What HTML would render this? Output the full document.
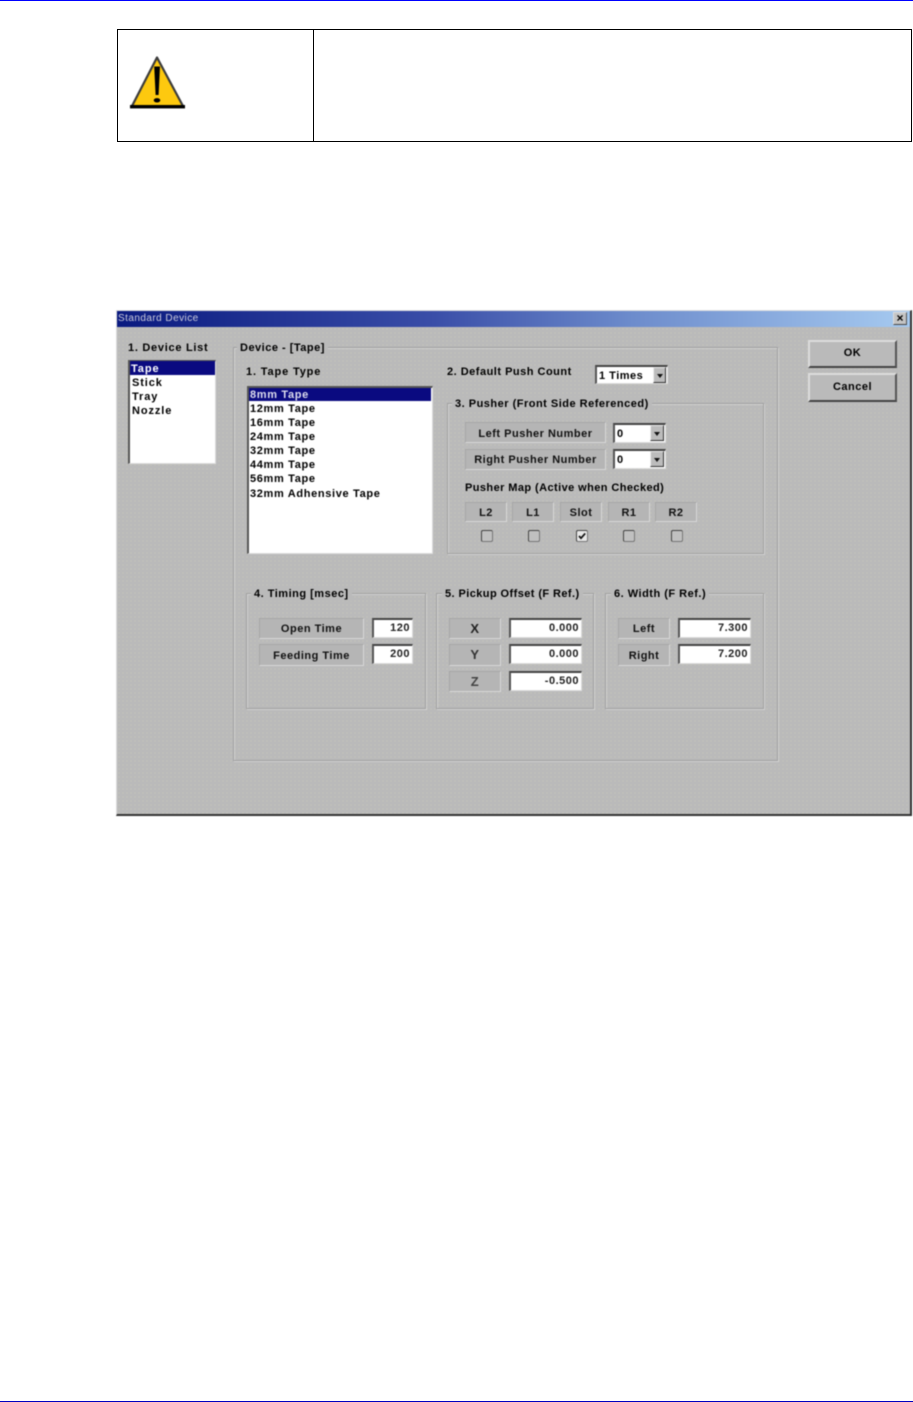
<!DOCTYPE html>
<html><head><meta charset="utf-8"><style>
html,body{margin:0;padding:0;background:#fff}
#p{position:relative;width:913px;height:1402px;overflow:hidden;background:#fff;font-family:"Liberation Sans",sans-serif}
#p div,#p svg{position:absolute;box-sizing:border-box}
#w{left:0;top:0;width:913px;height:1402px;filter:blur(.4px)}
#d{left:116px;top:310px;width:796px;height:506px;background-color:#bababa;background-image:radial-gradient(#c8c8b8 .6px,transparent .8px);background-size:4px 4px;border-right:2px solid #333;border-bottom:2px solid #333;border-top:1px solid #ddd;border-left:1px solid #ddd}
.abs{position:absolute}
.t{font-weight:bold;font-size:11px;letter-spacing:.5px;line-height:14px;height:14px;white-space:nowrap;color:#000}
.li{letter-spacing:.66px}
.sh{letter-spacing:.9px}
.g{border:1px solid #a0a0a0;box-shadow:1px 1px 0 #d2d2d2,inset 1px 1px 0 #d2d2d2}
.bg{background:#bababa;padding:0 3px}
.lb{border:1px solid #a6a6a6;border-right-color:#d8d8d8;border-bottom-color:#d8d8d8;background:#b5b5b5;text-align:center;color:#111;font-weight:bold;font-size:11px;letter-spacing:.5px;white-space:nowrap}
.in{background:#fff;border-top:2px solid #444;border-left:2px solid #555;border-right:1px solid #ddd;border-bottom:1px solid #ddd;text-align:right;font-weight:bold;font-size:11px;letter-spacing:.5px;color:#222;padding-right:2px}
.ar{background:#bcbcbc;border-right:1px solid #333;border-bottom:1px solid #333;border-top:1px solid #eee;border-left:1px solid #eee}
.ar:after{content:"";position:absolute;left:3px;top:6px;border:3px solid transparent;border-top:4px solid #111;border-bottom:0}
.cb{width:12px;height:12px;top:530px;background:#c0c0c0;border:1px solid #444;border-right-color:#777;border-bottom-color:#777;border-radius:2px}
.btn{background:#bababa;border-top:2px solid #dcdcdc;border-left:2px solid #dcdcdc;border-right:2px solid #555;border-bottom:2px solid #444;text-align:center;font-weight:bold;font-size:11px;letter-spacing:.5px;color:#000}
.sel{background:#0a0a80}
</style></head><body><div id="p">
<div style="left:0;top:0;width:913px;height:1px;background:#0000ff"></div>
<div style="left:0;top:1401px;width:913px;height:1px;background:#0000c0"></div>
<div style="left:117px;top:29px;width:795px;height:113px;border:1px solid #000"></div>
<div style="left:313px;top:29px;width:1px;height:113px;background:#000"></div>
<svg style="left:128px;top:54px;filter:blur(.4px)" width="60" height="56" viewBox="128 54 60 56">
<path d="M157 57.5 L183.5 107 L131.5 107 Z" fill="#fdc90f" stroke="#3c3c3c" stroke-width="2.2" stroke-linejoin="round"/>
<rect x="130" y="105" width="55" height="3.4" fill="#000"/>
<path d="M154.2 66.5 L160 66.5 L158.6 95 L155.6 95 Z" fill="#000"/>
<ellipse cx="157" cy="100.3" rx="3.3" ry="2.2" fill="#000"/>
</svg>

<div id="w">
<div id="d"></div>
<div style="left:117px;top:311px;width:793px;height:16px;background:linear-gradient(90deg,#0a1a80 0%,#3a4ea8 40%,#6d8ccc 65%,#a6caf0 100%)"></div>
<div class="abs t" style="left:118px;top:312px;font-weight:normal;font-size:10px;letter-spacing:.45px;color:#ccd;">Standard Device</div>
<div class="btn" style="left:893px;top:312px;width:14px;height:13px;border-width:1px;font-size:12px;line-height:10px;letter-spacing:0;background:#c4c4c4">×</div>

<div class="abs t li" style="left:128px;top:341px;letter-spacing:.72px">1. Device List</div>
<div style="left:128px;top:360px;width:88px;height:104px;background:#fff;border-top:2px solid #555;border-left:2px solid #555;border-right:1px solid #ddd;border-bottom:1px solid #ddd"></div>
<div class="sel" style="left:130px;top:361px;width:85px;height:14px"></div>
<div class="abs t sh" style="left:131px;top:362px;color:#fff">Tape</div>
<div class="abs t sh" style="left:132px;top:376px">Stick</div>
<div class="abs t sh" style="left:132px;top:390px">Tray</div>
<div class="abs t sh" style="left:132px;top:404px">Nozzle</div>

<div class="g" style="left:233px;top:347px;width:545px;height:414px"></div>
<div class="abs t bg" style="left:237px;top:341px">Device - [Tape]</div>
<div class="abs t" style="left:246px;top:365px;letter-spacing:.85px">1. Tape Type</div>
<div style="left:247px;top:386px;width:186px;height:168px;background:#fff;border-top:2px solid #555;border-left:2px solid #555;border-right:1px solid #ddd;border-bottom:1px solid #ddd"></div>
<div class="sel" style="left:249px;top:388px;width:182px;height:13px"></div>
<div class="abs t li" style="left:250px;top:388px;color:#dde">8mm Tape</div>
<div class="abs t li" style="left:250px;top:402px">12mm Tape</div>
<div class="abs t li" style="left:250px;top:416px">16mm Tape</div>
<div class="abs t li" style="left:250px;top:430px">24mm Tape</div>
<div class="abs t li" style="left:250px;top:444px">32mm Tape</div>
<div class="abs t li" style="left:250px;top:458px">44mm Tape</div>
<div class="abs t li" style="left:250px;top:472px">56mm Tape</div>
<div class="abs t li" style="left:250px;top:487px">32mm Adhensive Tape</div>

<div class="abs t" style="left:447px;top:365px">2. Default Push Count</div>
<div class="in" style="left:595px;top:365px;width:73px;height:19px;text-align:left;padding-left:2px;line-height:18px;color:#000">1 Times</div>
<div class="ar" style="left:653px;top:367px;width:13px;height:16px"></div>

<div class="g" style="left:447px;top:403px;width:317px;height:151px"></div>
<div class="abs t bg" style="left:452px;top:397px">3. Pusher (Front Side Referenced)</div>
<div class="lb" style="left:465px;top:422px;width:141px;height:21px;line-height:22px">Left Pusher Number</div>
<div class="in" style="left:613px;top:423px;width:53px;height:20px;text-align:left;line-height:18px;padding-left:2px;color:#000">0</div>
<div class="ar" style="left:650px;top:425px;width:14px;height:16px"></div>
<div class="lb" style="left:465px;top:449px;width:141px;height:21px;line-height:20px">Right Pusher Number</div>
<div class="in" style="left:613px;top:449px;width:53px;height:20px;text-align:left;line-height:18px;padding-left:2px;color:#000">0</div>
<div class="ar" style="left:650px;top:451px;width:14px;height:16px"></div>
<div class="abs t" style="left:465px;top:481px;letter-spacing:.42px">Pusher Map (Active when Checked)</div>
<div class="lb" style="left:465px;top:502px;width:42px;height:20px;line-height:20px">L2</div>
<div class="lb" style="left:512px;top:502px;width:42px;height:20px;line-height:20px">L1</div>
<div class="lb" style="left:560px;top:502px;width:42px;height:20px;line-height:20px">Slot</div>
<div class="lb" style="left:608px;top:502px;width:42px;height:20px;line-height:20px">R1</div>
<div class="lb" style="left:655px;top:502px;width:42px;height:20px;line-height:20px">R2</div>
<div class="cb" style="left:481px"></div>
<div class="cb" style="left:528px"></div>
<div class="cb" style="left:576px;background:#e8e8e8"></div>
<svg style="left:576px;top:530px" width="12" height="12" viewBox="0 0 12 12"><path d="M3 6 L5 8.2 L9.2 3.4" fill="none" stroke="#111" stroke-width="1.7"/></svg>
<div class="cb" style="left:623px"></div>
<div class="cb" style="left:671px"></div>

<div class="btn" style="left:808px;top:340px;width:89px;height:28px;line-height:23px">OK</div>
<div class="btn" style="left:808px;top:373px;width:89px;height:29px;line-height:25px">Cancel</div>

<div class="g" style="left:246px;top:593px;width:180px;height:116px"></div>
<div class="abs t bg" style="left:251px;top:587px">4. Timing [msec]</div>
<div class="lb" style="left:259px;top:618px;width:105px;height:21px;line-height:20px">Open Time</div>
<div class="in" style="left:372px;top:618px;width:41px;height:20px;line-height:16px">120</div>
<div class="lb" style="left:259px;top:644px;width:105px;height:22px;line-height:22px">Feeding Time</div>
<div class="in" style="left:372px;top:644px;width:41px;height:20px;line-height:16px">200</div>

<div class="g" style="left:436px;top:593px;width:158px;height:116px"></div>
<div class="abs t bg" style="left:442px;top:587px;letter-spacing:.42px">5. Pickup Offset (F Ref.)</div>
<div class="lb" style="left:449px;top:618px;width:52px;height:21px;line-height:19px;font-size:13px;color:#222">X</div>
<div class="in" style="left:509px;top:618px;width:73px;height:20px;line-height:16px">0.000</div>
<div class="lb" style="left:449px;top:644px;width:52px;height:22px;line-height:20px;font-size:13px;color:#333">Y</div>
<div class="in" style="left:509px;top:644px;width:73px;height:20px;line-height:16px">0.000</div>
<div class="lb" style="left:449px;top:671px;width:52px;height:21px;line-height:19px;font-size:13px;color:#444">Z</div>
<div class="in" style="left:509px;top:671px;width:73px;height:20px;line-height:16px">-0.500</div>

<div class="g" style="left:605px;top:593px;width:159px;height:116px"></div>
<div class="abs t bg" style="left:611px;top:587px">6. Width (F Ref.)</div>
<div class="lb" style="left:618px;top:618px;width:52px;height:21px;line-height:20px">Left</div>
<div class="in" style="left:678px;top:618px;width:73px;height:20px;line-height:16px">7.300</div>
<div class="lb" style="left:618px;top:644px;width:52px;height:22px;line-height:22px">Right</div>
<div class="in" style="left:678px;top:644px;width:73px;height:20px;line-height:16px">7.200</div>
</div>
</div></body></html>
